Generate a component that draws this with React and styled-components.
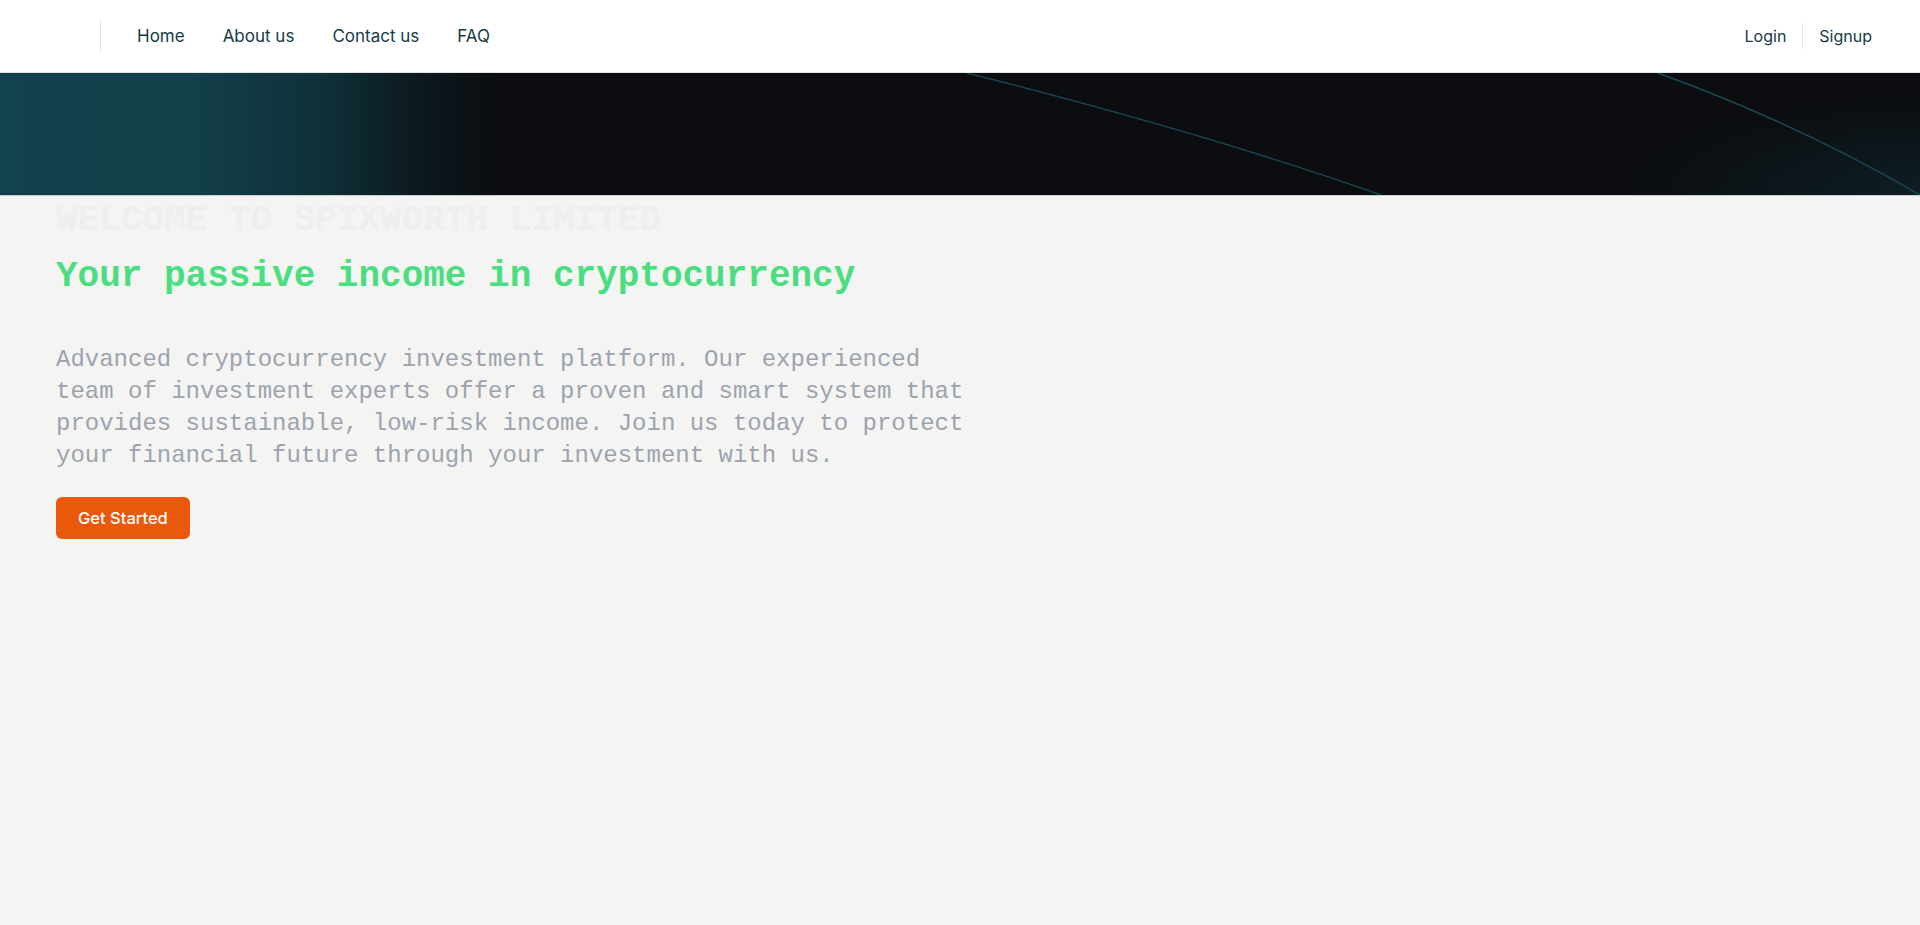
import styled, { createGlobalStyle } from "styled-components";

const GlobalStyle = createGlobalStyle`
  * { box-sizing: border-box; }
  body {
    margin: 0;
    background: #f4f4f2;
    font-family: Inter, "Noto Sans", sans-serif;
  }
`;

const Header = styled.header`
  height: 73px;
  background: #ffffff;
  border-bottom: 1px solid #e2e4e6;
  display: flex;
  align-items: center;
  justify-content: space-between;
  padding: 0 48px 0 100px;
`;

const NavGroup = styled.nav`
  display: flex;
  align-items: center;
  height: 32px;
  border-left: ${(p) => (p.$divider ? "1px solid #e3e5e8" : "none")};
  padding-left: ${(p) => (p.$divider ? "36px" : "0")};
  gap: 38px;
`;

const NavLink = styled.a`
  font-size: 17px;
  color: #163b45;
  text-decoration: none;
  cursor: pointer;
`;

const AuthGroup = styled.div`
  display: flex;
  align-items: center;
`;

const AuthLink = styled.a`
  font-size: 16px;
  color: #163b45;
  text-decoration: none;
  padding: 0 16px;
  line-height: 26px;
  border-left: ${(p) => (p.$divider ? "1px solid #e3e5e8" : "none")};
  &:last-child {
    padding-right: 0;
  }
`;

const Banner = styled.div`
  position: relative;
  height: 123px;
  overflow: hidden;
  background:
    radial-gradient(ellipse 420px 140px at 100% 100%, rgba(20, 70, 78, 0.3), transparent 70%),
    linear-gradient(90deg, #12424d 0%, #12404b 10%, #0f2f37 17%, #0c181d 22%, #0b0d11 26%, #0b0d11 100%);
  border-bottom: 1px solid #c9cbcd;
`;

const Curves = styled.svg`
  position: absolute;
  inset: 0;
  width: 100%;
  height: 100%;
`;

const Hero = styled.section`
  padding: 5px 56px 0;
  max-width: 1040px;
`;

const Welcome = styled.h2`
  margin: 0;
  font-family: "Liberation Mono", "DejaVu Sans Mono", monospace;
  font-size: 36px;
  line-height: 40px;
  font-weight: 700;
  color: #eceef0;
`;

const Title = styled.h1`
  margin: 16px 0 0;
  font-family: "Liberation Mono", "DejaVu Sans Mono", monospace;
  font-size: 36px;
  line-height: 40px;
  font-weight: 700;
  color: #4ade80;
`;

const Lead = styled.p`
  margin: 47px 0 0;
  font-family: "Liberation Mono", "DejaVu Sans Mono", monospace;
  font-size: 24px;
  line-height: 32px;
  color: #9ca3af;
  max-width: 960px;
`;

const Button = styled.button`
  margin-top: 25px;
  height: 42px;
  padding: 0 22px;
  border: none;
  border-radius: 6px;
  background: #ea580c;
  color: #ffffff;
  font-family: Inter, "Noto Sans", sans-serif;
  font-size: 16.5px;
  font-weight: 500;
  cursor: pointer;
`;

export default function App() {
  return (
    <>
      <GlobalStyle />
      <Header>
        <NavGroup $divider>
          <NavLink>Home</NavLink>
          <NavLink>About us</NavLink>
          <NavLink>Contact us</NavLink>
          <NavLink>FAQ</NavLink>
        </NavGroup>
        <AuthGroup>
          <AuthLink>Login</AuthLink>
          <AuthLink $divider>Signup</AuthLink>
        </AuthGroup>
      </Header>
      <Banner>
        <Curves viewBox="0 0 1920 123" preserveAspectRatio="none">
          <path d="M967 0 Q1210 62 1381 123" fill="none" stroke="#15464e" strokeWidth="1.5" />
          <path d="M1658 0 Q1800 52 1920 123" fill="none" stroke="#174c55" strokeWidth="1.5" />
        </Curves>
      </Banner>
      <Hero>
        <Welcome>WELCOME TO SPIXWORTH LIMITED</Welcome>
        <Title>Your passive income in cryptocurrency</Title>
        <Lead>
          Advanced cryptocurrency investment platform. Our experienced team of
          investment experts offer a proven and smart system that provides
          sustainable, low-risk income. Join us today to protect your financial
          future through your investment with us.
        </Lead>
        <Button>Get Started</Button>
      </Hero>
    </>
  );
}
